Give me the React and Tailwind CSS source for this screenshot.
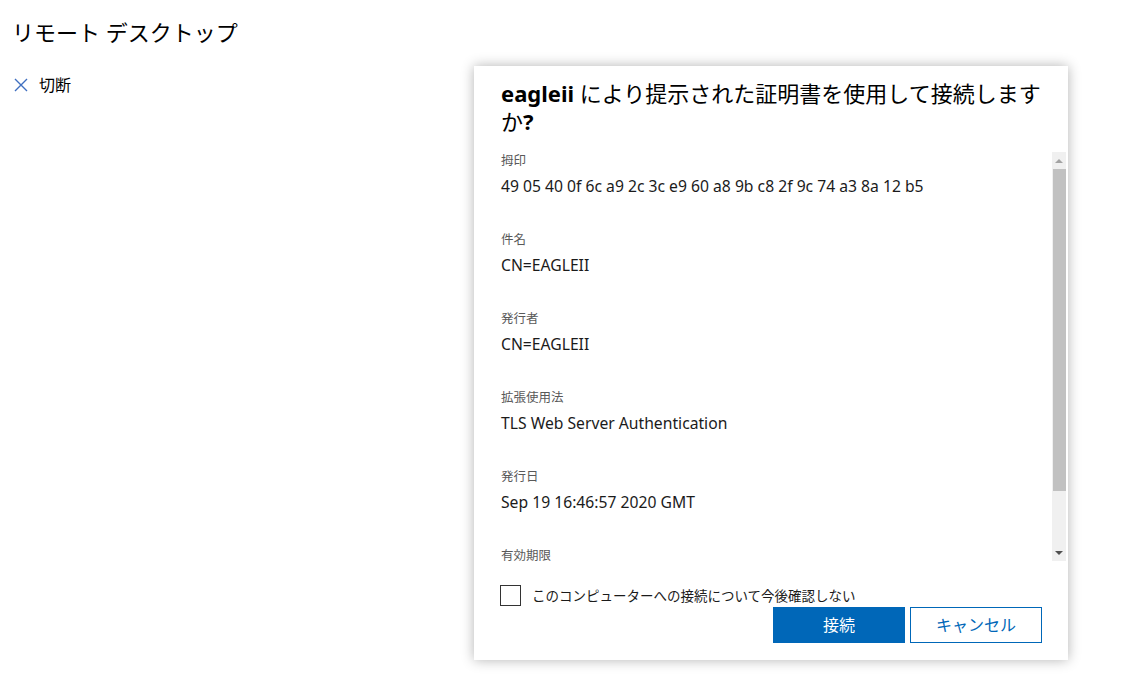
const fields = [
  { label: "拇印", value: "49 05 40 0f 6c a9 2c 3c e9 60 a8 9b c8 2f 9c 74 a3 8a 12 b5" },
  { label: "件名", value: "CN=EAGLEII" },
  { label: "発行者", value: "CN=EAGLEII" },
  { label: "拡張使用法", value: "TLS Web Server Authentication" },
  { label: "発行日", value: "Sep 19 16:46:57 2020 GMT" },
  { label: "有効期限", value: null },
];

export default function App() {
  return (
    <div className="relative w-[1131px] h-[677px] bg-white text-black overflow-hidden font-['Segoe_UI','Noto_Sans','Noto_Sans_CJK_JP',sans-serif]">
      <div className="pl-[12px] pt-[18px]">
        <h1 className="text-[22px] leading-[28px] font-normal">リモート デスクトップ</h1>
        <div className="flex items-center mt-[28px] pl-[2px] gap-[11px] text-[16px] leading-[22px]">
          <svg width="14" height="14" viewBox="0 0 14 14" className="text-[#3f6fc0]">
            <path d="M1 1 L13 13 M13 1 L1 13" stroke="currentColor" strokeWidth="1.4" fill="none" />
          </svg>
          <span>切断</span>
        </div>
      </div>

      <div className="absolute left-[474px] top-[66px] w-[594px] h-[594px] bg-white shadow-[0_0_12px_rgba(0,0,0,0.3)] flex flex-col">
        <h2 className="pl-[27px] pr-[27px] pt-[13px] text-[22px] leading-[28px] font-normal">
          <span className="font-bold">eagleii</span> により提示された証明書を使用して接続しますか<span className="font-bold">?</span>
        </h2>
        <div className="mt-[17px] h-[409px] flex">
          <div className="flex-1 pl-[27px] pr-[10px]">
            <div className="flex flex-col gap-[34px]">
              {fields.map((f) => (
                <div key={f.label} className="flex flex-col gap-[5px]">
                  <div className="text-[12.5px] leading-[18px] text-[#595959]">{f.label}</div>
                  {f.value && (
                    <div className="text-[15.7px] leading-[22px] text-[#1b1b1b]">{f.value}</div>
                  )}
                </div>
              ))}
            </div>
          </div>
          <div className="w-[14px] mr-[2px] bg-[#f0f0f0] flex flex-col items-center">
            <div className="h-[17px] flex items-center justify-center">
              <div className="w-0 h-0 border-l-[4px] border-r-[4px] border-b-[4px] border-l-transparent border-r-transparent border-b-[#a3a3a3]" />
            </div>
            <div className="w-[13px] h-[322px] bg-[#c1c1c1]" />
            <div className="flex-1" />
            <div className="h-[17px] flex items-center justify-center">
              <div className="w-0 h-0 border-l-[4px] border-r-[4px] border-t-[4px] border-l-transparent border-r-transparent border-t-[#505050]" />
            </div>
          </div>
        </div>
        <div className="pl-[26px] pr-[26px] mt-[24px]">
          <label className="flex items-center gap-[11px]">
            <span className="w-[21px] h-[21px] border-[1.5px] border-[#333]" />
            <span className="text-[13.5px] leading-[20px] text-[#1b1b1b]">このコンピューターへの接続について今後確認しない</span>
          </label>
          <div className="flex justify-end gap-[5px] mt-[1px]">
            <button className="w-[132px] h-[36px] bg-[#0067b8] text-white text-[16px]">接続</button>
            <button className="w-[132px] h-[36px] border border-[#0067b8] text-[#0067b8] text-[16px]">キャンセル</button>
          </div>
        </div>
      </div>
    </div>
  );
}
